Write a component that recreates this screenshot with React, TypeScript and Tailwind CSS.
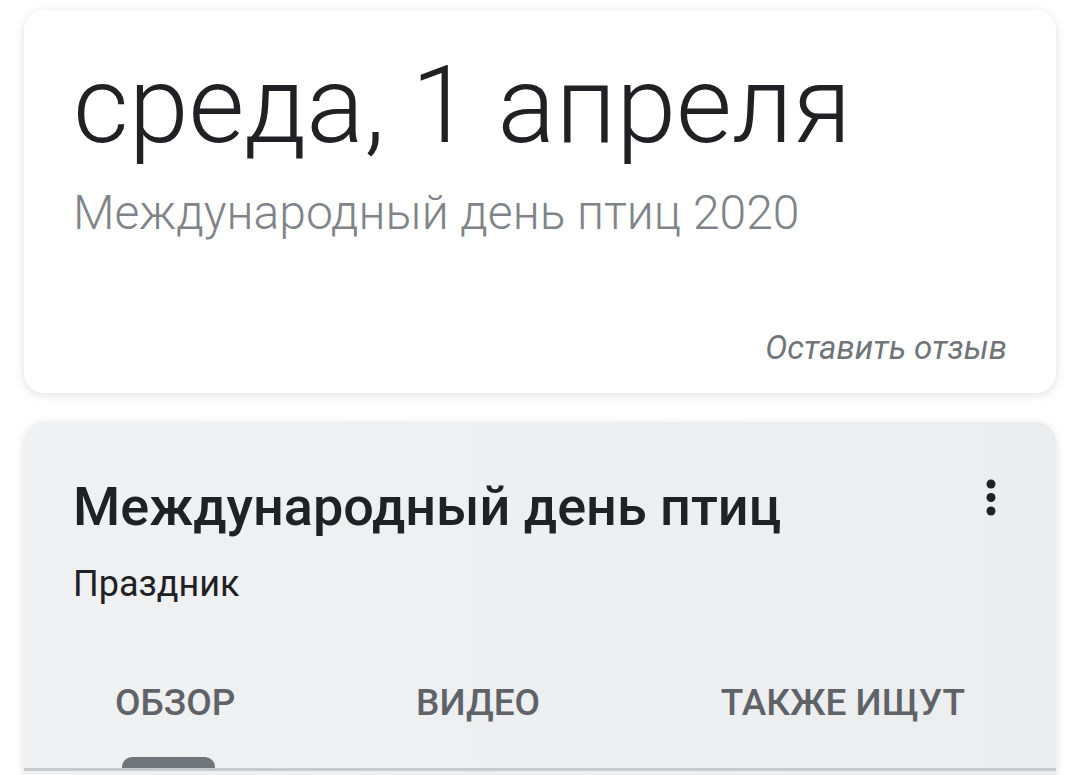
import React from "react";

const tabs = ["ОБЗОР", "ВИДЕО", "ТАКЖЕ ИЩУТ"];

export default function App() {
    return (
        <div className="h-[775px] w-[1080px] overflow-hidden bg-white font-['Roboto',sans-serif]">
            <div className="flex flex-col gap-[29px] px-6 pt-[10px]">
                {/* Date card */}
                <div className="flex h-[383px] flex-col rounded-[20px] bg-white px-[49px] shadow-[0_2px_10px_rgba(0,0,0,0.12)]">
                    <h1 className="mt-[40px] text-[108px] leading-[110px] font-light text-[#202124]">
                        среда, 1 апреля
                    </h1>
                    <p className="mt-[25px] text-[48px] leading-[56px] font-light text-[#808488]">
                        Международный день птиц 2020
                    </p>
                    <div className="mt-auto mb-[21px] flex justify-end">
                        <span className="text-[33px] italic text-[#70757a]">Оставить отзыв</span>
                    </div>
                </div>

                {/* Knowledge card */}
                <div className="flex h-[353px] flex-col rounded-t-[20px] bg-gradient-to-r from-[#f0f1f2] to-[#ebedee] shadow-[0_2px_10px_rgba(0,0,0,0.12)]">
                    <div className="flex items-start justify-between pt-[53px] pr-[60px] pl-[49px]">
                        <div className="flex flex-col">
                            <h2 className="text-[54px] leading-[64px] font-medium text-[#202124]">
                                Международный день птиц
                            </h2>
                            <p className="mt-[24px] text-[36px] leading-[42px] text-[#202124]">Праздник</p>
                        </div>
                        <svg width="10" height="38" viewBox="0 0 10 38" className="mt-[4px]">
                            <circle cx="5" cy="5" r="4.5" fill="#202124" />
                            <circle cx="5" cy="18.5" r="4.5" fill="#202124" />
                            <circle cx="5" cy="32" r="4.5" fill="#202124" />
                        </svg>
                    </div>
                    <div className="mt-auto flex flex-col pb-[4px]">
                        <div className="flex justify-between px-[91px]">
                            {tabs.map((t, i) => (
                                <div key={t} className="relative flex flex-col items-start pb-[43px]">
                                    <span className="text-[37px] leading-[44px] font-medium text-[#5f6368]">{t}</span>
                                    {i === 0 && (
                                        <div className="absolute bottom-0 left-[7px] h-[11px] w-[93px] rounded-t-[10px] bg-[#70757a]" />
                                    )}
                                </div>
                            ))}
                        </div>
                        <div className="h-[3px] bg-[#c8cacc]" />
                    </div>
                </div>
            </div>
        </div>
    );
}
